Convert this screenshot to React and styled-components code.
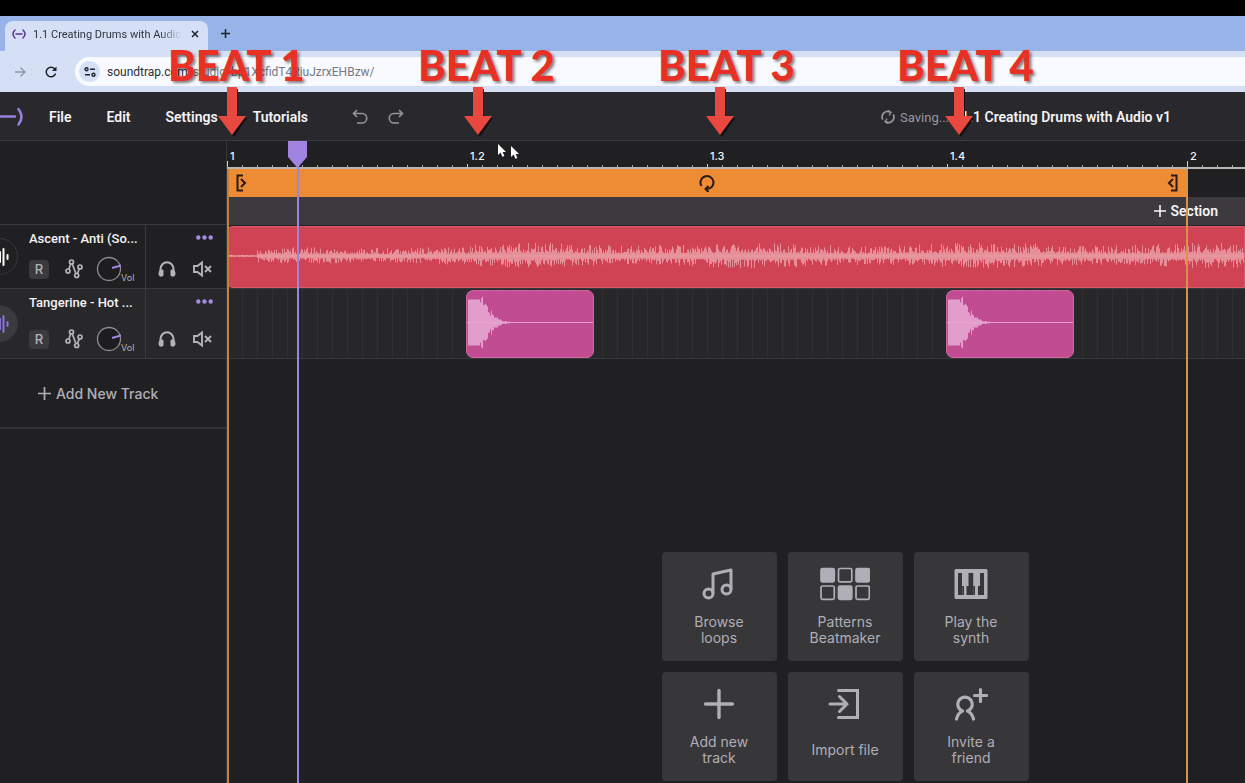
import React from "react";
import styled, { createGlobalStyle } from "styled-components";

const BEAT = 240;

const GlobalStyle = createGlobalStyle`
  * {
    box-sizing: border-box;
  }

  body {
    margin: 0;
    background: #202022;
    font-family: Inter, "Liberation Sans", sans-serif;
    color: #f4f3f6;
  }

  button,
  input {
    margin: 0;
    padding: 0;
    border: 0;
    background: none;
    color: inherit;
    font: inherit;
  }

  svg {
    display: block;
    flex: none;
  }
`;

const Page = styled.div`
  position: relative;
  display: flex;
  flex-direction: column;
  min-height: 100vh;
  overflow: hidden;
`;

/* ---------- browser chrome ---------- */

const TopBand = styled.div`
  height: 16px;
  background: #000;
`;

const TabStrip = styled.div`
  display: flex;
  align-items: flex-end;
  height: 35px;
  padding-left: 5px;
  background: #97b3e8;
  font-family: Roboto, "Open Sans", sans-serif;
`;

const Tab = styled.div`
  display: flex;
  align-items: center;
  gap: 7px;
  width: 203px;
  height: 30px;
  padding: 0 7px 4px;
  border-radius: 8px 8px 0 0;
  background: #d5e0f7;
`;

const TabTitle = styled.span`
  flex: 1;
  white-space: nowrap;
  font-size: 11px;
  color: #2f3440;
  mask-image: linear-gradient(to right, #000 85%, transparent);
`;

const ChromeButton = styled.button`
  display: grid;
  place-items: center;
  width: 14px;
  height: 20px;
  color: ${({ $faded }) => ($faded ? "#8d95a5" : "#1d2027")};
`;

const NewTab = styled(ChromeButton)`
  margin: 0 0 8px 10px;
`;

const AddressRow = styled.div`
  display: flex;
  align-items: center;
  height: 41px;
  padding-left: 13px;
  gap: 17px;
  background: #d5e0f7;
  font-family: Roboto, "Open Sans", sans-serif;
`;

const AddressBox = styled.label`
  flex: 1;
  display: flex;
  align-items: center;
  height: 29px;
  padding-left: 4px;
  border-radius: 15px 0 0 15px;
  background: #f8faff;
  font-size: 12px;
  color: #2b2f38;
`;

const SiteInfo = styled.span`
  display: grid;
  place-items: center;
  width: 21px;
  height: 21px;
  margin-right: 7px;
  border-radius: 50%;
  background: #d5e0f7;
  color: #20242c;
`;

const UrlInput = styled.input`
  flex: 1;
  outline: none;
  color: #747985;
`;

/* ---------- studio header ---------- */

const Header = styled.header`
  display: flex;
  align-items: center;
  height: 49px;
  padding: 2px 74px 0 0;
  border-bottom: 1px solid #3a393d;
  background: #29282c;
  font-family: Roboto, "Liberation Sans", sans-serif;
`;

const Menu = styled.nav`
  display: flex;
  gap: 35px;
  margin-left: 25px;
`;

const MenuButton = styled.button`
  font-size: 14px;
  font-weight: 600;
  line-height: 20px;
`;

const History = styled.div`
  display: flex;
  gap: 20px;
  margin-left: 44px;
  color: #96949a;
`;

const Status = styled.div`
  display: flex;
  align-items: center;
  gap: 5px;
  margin-left: auto;
  font-size: 13px;
  color: #9a989e;
`;

const ProjectTitle = styled.h1`
  margin: 0 0 0 12px;
  font-size: 14px;
  font-weight: 600;
  line-height: 20px;
`;

/* ---------- track list ---------- */

const Studio = styled.main`
  flex: 1;
  display: flex;
`;

const Sidebar = styled.aside`
  width: 227px;
  padding-top: 83px;
  overflow: hidden;
  border-right: 1px solid #363538;
`;

const TrackRow = styled.div`
  display: flex;
  height: ${({ $height }) => $height}px;
  border-top: 1px solid #3a393c;
  background: ${({ $active }) => ($active ? "#28282a" : "#202022")};
`;

const Avatar = styled.div`
  display: grid;
  place-items: center end;
  align-self: center;
  width: 37px;
  height: 37px;
  margin-left: -19px;
  padding-right: 8px;
  border: 1px solid #39383c;
  border-radius: 50%;
  background: ${({ $active }) => ($active ? "#3b3a3f" : "#202022")};
  color: ${({ $active }) => ($active ? "#8d72d6" : "#fff")};
`;

const TrackMain = styled.div`
  flex: 1;
  display: flex;
  flex-direction: column;
  justify-content: space-between;
  padding: 5px 0 6px 11px;
`;

const TrackName = styled.div`
  font-family: Roboto, "Liberation Sans", sans-serif;
  font-size: 13px;
  font-weight: 500;
  line-height: 18px;
  white-space: nowrap;
`;

const Controls = styled.div`
  display: flex;
  align-items: center;
  gap: ${({ $gap }) => $gap}px;
  height: 26px;
  color: #b5b2b9;
`;

const RecordButton = styled.button`
  width: 20px;
  height: 19px;
  border-radius: 4px;
  background: #3b3a3e;
  font-size: 13px;
  font-weight: 500;
  line-height: 19px;
`;

const IconButton = styled.button`
  display: block;
`;

const Volume = styled.label`
  display: flex;
  align-items: flex-end;
  margin-left: -4px;
  font-size: 9px;
  line-height: 8px;
`;

const HiddenRange = styled.input`
  width: 0;
  height: 0;
  appearance: none;
  opacity: 0;
`;

const TrackSide = styled.div`
  display: flex;
  flex-direction: column;
  justify-content: space-between;
  width: 81px;
  padding: 5px 0 6px 12px;
  border-left: 1px solid #3a393c;
`;

const MoreButton = styled(IconButton)`
  align-self: flex-end;
  margin: 5px 13px 0 0;
  color: #a68ae6;
`;

const AddTrack = styled.button`
  display: flex;
  align-items: center;
  gap: 5px;
  width: 100%;
  height: 71px;
  padding-left: 38px;
  border-top: 1px solid #3a393c;
  border-bottom: 2px solid #343336;
  font-size: 14px;
  font-weight: 500;
  color: #b1afb5;
`;

/* ---------- timeline ---------- */

const Timeline = styled.section`
  position: relative;
  flex: 1;
  display: flex;
  flex-direction: column;
  min-width: 0;
  overflow: hidden;
`;

const Ruler = styled.div`
  display: flex;
  height: 28px;
  overflow: hidden;
  border-bottom: 2px solid #b9b5b1;
`;

const BeatCell = styled.div`
  flex: none;
  width: ${BEAT}px;
  padding: 8px 0 0 3px;
  font-size: 11px;
  font-weight: 500;
  line-height: 14px;
  background:
    linear-gradient(#cfcdd2, #cfcdd2) 0 100% / 1px ${({ $bar }) => ($bar ? 6 : 3)}px no-repeat,
    repeating-linear-gradient(to right, #aaa8ad 0 1px, transparent 1px 15px) 0 100% / 100% 2px no-repeat;
`;

const LoopRow = styled.div`
  display: flex;
  height: 28px;
`;

const LoopBar = styled.div`
  display: flex;
  align-items: center;
  justify-content: space-between;
  width: ${BEAT * 4}px;
  padding: 0 8px;
  background: #ee8c35;
  color: #2a1a14;
`;

const SectionRow = styled.div`
  display: flex;
  justify-content: flex-end;
  height: 28px;
  padding-right: 27px;
  background: #3c3a3e;
`;

const SectionButton = styled.button`
  display: flex;
  align-items: center;
  gap: 5px;
  font-family: Roboto, "Liberation Sans", sans-serif;
  font-size: 14px;
  font-weight: 600;
`;

const Lane = styled.div`
  position: relative;
  height: ${({ $height }) => $height}px;
  border-bottom: 1px solid #38373a;
  background: ${({ $active }) =>
    $active
      ? "repeating-linear-gradient(to right, #303032 0 1px, #272729 1px 15px)"
      : "#202022"};
`;

const Clip = styled.div`
  position: absolute;
  top: 1px;
  bottom: 0;
  left: ${({ $start }) => $start * BEAT - 1}px;
  ${({ $length }) => ($length ? `width: ${$length}px;` : "right: 0;")}
  display: flex;
  align-items: center;
  overflow: hidden;
  border: 1px solid ${({ $edge }) => $edge};
  border-radius: ${({ $length }) => ($length ? "7px" : "7px 0 0 7px")};
  background: ${({ $color }) => $color};
`;

const Marker = styled.div`
  position: absolute;
  top: ${({ $top }) => $top}px;
  bottom: 0;
  left: ${({ $x }) => $x}px;
  width: 2px;
  background: ${({ $color }) => $color};
`;

const PlayheadCap = styled.svg`
  position: absolute;
  top: 0;
  left: 61px;
`;

const StartPanel = styled.div`
  flex: 1;
  display: flex;
  align-items: flex-end;
  justify-content: center;
  padding: 24px 0 2px 218px;
`;

const StartGrid = styled.div`
  display: grid;
  grid-template-columns: repeat(3, 115px);
  gap: 11px;
`;

const StartCard = styled.button`
  display: flex;
  flex-direction: column;
  align-items: center;
  height: 109px;
  padding: 15px 12px;
  border-radius: 4px;
  background: #373639;
  color: #b0aeb6;
`;

const CardLabel = styled.span`
  flex: 1;
  display: flex;
  align-items: center;
  margin-top: 12px;
  font-size: 14px;
  line-height: 16px;
`;

/* ---------- annotations ---------- */

const Callout = styled.div`
  position: absolute;
  top: 44px;
  left: ${({ $x }) => $x}px;
  font-family: Lato, "Open Sans", sans-serif;
  font-size: 42px;
  font-weight: 900;
  line-height: 42px;
  white-space: nowrap;
  color: #e83025;
  text-shadow: 2px 2px 3px rgba(0, 0, 0, 0.5);
`;

const Arrow = styled.svg`
  position: absolute;
  top: 86px;
  left: ${({ $x }) => $x - 16}px;
`;

const Pointer = styled.svg`
  position: absolute;
  top: ${({ $y }) => $y}px;
  left: ${({ $x }) => $x}px;
`;

const stroke = {
  fill: "none",
  stroke: "currentColor",
  strokeWidth: 2,
};

const Plus = ({ size = 12, width = 1.6 }) => (
  <svg width={size} height={size} viewBox="0 0 12 12" {...stroke} strokeWidth={width}>
    <path d="M6 0v12M0 6h12" />
  </svg>
);

const TrackWave = () => (
  <svg width="10" height="20" viewBox="0 0 10 20" {...stroke} strokeLinecap="round">
    <path d="M1 5v10M4.500 2v16M8.500 8v4" />
  </svg>
);

const Nodes = () => (
  <svg width="18" height="20" viewBox="0 0 18 20" {...stroke} strokeWidth="1.700">
    <path d="M3.700 10.200L5.700 5M7.200 4.800l3.800 9.900M12.400 14.600l1.900-4.800" />
    <circle cx="3" cy="12" r="2" />
    <circle cx="6.500" cy="3" r="2" />
    <circle cx="11.700" cy="16.500" r="2" />
    <circle cx="15" cy="8" r="2" />
  </svg>
);

const Knob = () => (
  <svg width="26" height="26" viewBox="0 0 26 26">
    <circle cx="14" cy="13" r="11.500" fill="#1d1c1f" stroke="#8f8d92" strokeWidth="1.300" />
    <path d="M17 12l9-2.500" stroke="#a287e2" strokeWidth="2" />
  </svg>
);

const Headphones = () => (
  <svg width="18" height="18" viewBox="0 0 18 18">
    <path d="M2.500 14V9a6.500 6.800 0 0 1 13 0v5" fill="none" stroke="currentColor" strokeWidth="2" />
    <path d="M4.500 9.500C2 9 0.500 11 0.500 13.500S2 17 4 16.500c1-.3 1.500-.8 1.500-1.500v-4.500zM13.500 9.500c2.500-.5 4 1.500 4 4S16 17 14 16.500c-1-.3-1.500-.8-1.500-1.500v-4.500z" fill="currentColor" />
  </svg>
);

const Mute = () => (
  <svg width="19" height="18" viewBox="0 0 19 18" {...stroke}>
    <path d="M1 6h3.500L9 2.500v13L4.500 12H1z" strokeWidth="1.900" />
    <path d="M12 6l6 6M18 6l-6 6" strokeWidth="1.900" />
  </svg>
);

const Dots = () => (
  <svg width="17" height="5" viewBox="0 0 17 5" fill="currentColor">
    <circle cx="2.300" cy="2.500" r="2.200" />
    <circle cx="8.500" cy="2.500" r="2.200" />
    <circle cx="14.700" cy="2.500" r="2.200" />
  </svg>
);

const MusicIcon = () => (
  <svg width="34" height="34" viewBox="0 0 34 34" {...stroke} strokeWidth="3">
    <circle cx="6.500" cy="26.500" r="4.500" />
    <circle cx="24.500" cy="22.500" r="4.500" />
    <path d="M11 26.500V7l18-4v19.500" strokeLinejoin="round" />
  </svg>
);

const PadIcon = () => (
  <svg width="50" height="34" viewBox="0 0 50 34" stroke="currentColor" strokeWidth="1.700">
    {[0, 1, 2, 3, 4, 5].map((i) => (
      <rect
        key={i}
        x={(i % 3) * 17.5 + 1}
        y={i < 3 ? 1.5 : 19}
        width="13.300"
        height="13.300"
        rx="1.500"
        fill={[0, 2, 4].includes(i) ? "currentColor" : "none"}
      />
    ))}
  </svg>
);

const PianoIcon = () => (
  <svg width="34" height="34" viewBox="0 0 34 34">
    <rect x="0.500" y="2" width="33" height="30" rx="1.500" fill="currentColor" />
    <g fill="#373639">
      <rect x="4" y="6" width="4.500" height="22" />
      <rect x="14" y="6" width="5.500" height="22" />
      <rect x="25.500" y="6" width="4.500" height="22" />
    </g>
    <g fill="currentColor">
      <rect x="8" y="5" width="6.500" height="14" />
      <rect x="19.500" y="5" width="6.500" height="14" />
    </g>
    <g fill="#373639">
      <rect x="8.500" y="19" width="1.500" height="9" />
      <rect x="12.500" y="19" width="2" height="9" />
      <rect x="19.500" y="19" width="1.500" height="9" />
      <rect x="24" y="19" width="2" height="9" />
    </g>
  </svg>
);

const BigPlusIcon = () => (
  <svg width="34" height="34" viewBox="0 0 34 34" {...stroke} strokeWidth="3.400" strokeLinecap="round">
    <path d="M17 3.500v27M3.500 17h27" />
  </svg>
);

const ImportIcon = () => (
  <svg width="34" height="34" viewBox="0 0 34 34" {...stroke} strokeWidth="3" strokeLinecap="round">
    <path d="M10.500 3.500h19v27h-19M2 17h17M11.500 9.500L19 17l-7.500 7.500" />
  </svg>
);

const InviteIcon = () => (
  <svg width="34" height="34" viewBox="0 0 34 34" {...stroke} strokeWidth="3.200" strokeLinecap="round" strokeLinejoin="round">
    <path d="M2.500 32q1.500-6 6-8a7.200 7.200 0 1 1 5 0q4.500 2 6 8M26.500 2.500v12M20.500 8.500h12" />
  </svg>
);

const tracks = [
  { name: "Ascent - Anti (So...", height: 64, active: false },
  { name: "Tangerine - Hot ...", height: 70, active: true },
];

const beats = ["1", "1.2", "1.3", "1.4", "2"];

const startActions = [
  { label: ["Browse", "loops"], Icon: MusicIcon },
  { label: ["Patterns", "Beatmaker"], Icon: PadIcon },
  { label: ["Play the", "synth"], Icon: PianoIcon },
  { label: ["Add new", "track"], Icon: BigPlusIcon },
  { label: ["Import file"], Icon: ImportIcon },
  { label: ["Invite a", "friend"], Icon: InviteIcon },
];

const callouts = [
  { text: "BEAT 1", x: 168, arrow: 232 },
  { text: "BEAT 2", x: 418, arrow: 478 },
  { text: "BEAT 3", x: 658, arrow: 720 },
  { text: "BEAT 4", x: 897, arrow: 959 },
];

const noise = (i) => {
  const v = Math.sin(i * 127.1) * 43758.5453;
  return v - Math.floor(v);
};

const songPath = () => {
  let d = "M0 29H2400";
  for (let x = 2; x < 2400; x += 1) {
    const rise = x < 30 ? 1 : Math.min(4.5 + x / 80, 8.5);
    const swell = 1 + 0.15 * Math.sin(x / 37);
    const up = rise * swell * (0.35 + noise(x) ** 2 * 1.1);
    const down = rise * swell * (0.35 + noise(x + 5000) ** 2 * 0.9);
    d += `M${x}.5 ${(29 - up).toFixed(1)}V${(29 + down).toFixed(1)}`;
  }
  return d;
};

const hitPath = () => {
  let d = "M0 31.5H128";
  for (let x = 1; x < 44; x += 1) {
    let amp = 23;
    if (x > 12) amp = 23 * Math.exp(-(((x - 12) / 13) ** 1.5));
    const wobble = x < 13 ? 1 : 0.6 + noise(x) * 0.7;
    const h = Math.max(amp * wobble, 0.5);
    d += `M${x}.5 ${(31.5 - h).toFixed(1)}V${(31.5 + h).toFixed(1)}`;
  }
  return d;
};

const SongWave = () => (
  <svg width="2400" height="61" viewBox="0 0 2400 61">
    <path d={songPath()} stroke="#eba3ab" strokeWidth="0.800" fill="none" />
  </svg>
);

const HitWave = () => (
  <svg width="128" height="66" viewBox="0 0 128 66">
    <path d={hitPath()} stroke="#e5a6d0" strokeWidth="0.900" fill="none" />
  </svg>
);

function BrowserChrome() {
  return (
    <>
      <TopBand />
      <TabStrip>
        <Tab>
          <svg width="14" height="12" viewBox="0 0 14 12" fill="none" stroke="#5a3390" strokeWidth="1.500" strokeLinecap="round">
            <path d="M3 2Q-1 6 3 10M11 2q4 4 0 8M4 6h6" />
          </svg>
          <TabTitle>1.1 Creating Drums with Audio</TabTitle>
          <ChromeButton aria-label="Close tab">
            <svg width="8" height="8" viewBox="0 0 8 8" {...stroke} strokeWidth="1.500">
              <path d="M1 1l6 6M7 1L1 7" />
            </svg>
          </ChromeButton>
        </Tab>
        <NewTab aria-label="New tab">
          <Plus size={9} width={2} />
        </NewTab>
      </TabStrip>
      <AddressRow>
        <ChromeButton aria-label="Forward" $faded>
          <svg width="12" height="12" viewBox="0 0 12 12" {...stroke} strokeWidth="1.300">
            <path d="M1 6h10M6.500 1.500L11 6l-4.500 4.500" />
          </svg>
        </ChromeButton>
        <ChromeButton aria-label="Reload">
          <svg width="12" height="12" viewBox="0 0 12 12" {...stroke} strokeWidth="1.500">
            <path d="M10.600 7.500A4.800 4.800 0 1 1 10 3.200" />
            <path d="M11.500 0.500v4.500H7z" fill="currentColor" stroke="none" />
          </svg>
        </ChromeButton>
        <AddressBox>
          <SiteInfo>
            <svg width="12" height="10" viewBox="0 0 12 10" {...stroke} strokeWidth="1.400">
              <circle cx="2.500" cy="2.300" r="1.500" />
              <circle cx="9.500" cy="7.700" r="1.500" />
              <path d="M6 2.300h5M1 7.700h5" />
            </svg>
          </SiteInfo>
          soundtrap.com
          <UrlInput aria-label="Address" defaultValue="/studio/bp1XcfidT4RiuJzrxEHBzw/" />
        </AddressBox>
      </AddressRow>
    </>
  );
}

function StudioHeader() {
  return (
    <Header>
      <svg width="24" height="20" viewBox="0 0 24 20" fill="none" stroke="#9b7fe0" strokeWidth="2.500" strokeLinecap="round">
        <path d="M-2 9.500h17M18.500 2q6 8 0 15.500" />
      </svg>
      <Menu>
        <MenuButton>File</MenuButton>
        <MenuButton>Edit</MenuButton>
        <MenuButton>Settings</MenuButton>
        <MenuButton>Tutorials</MenuButton>
      </Menu>
      <History>
        <IconButton aria-label="Undo">
          <svg width="16" height="16" viewBox="0 0 16 16" {...stroke} strokeWidth="1.600">
            <path d="M5 1L1.500 4.500 5 8M1.500 4.500H10a4.700 4.700 0 0 1 0 9.500H5" />
          </svg>
        </IconButton>
        <IconButton aria-label="Redo">
          <svg width="16" height="16" viewBox="0 0 16 16" {...stroke} strokeWidth="1.600">
            <path d="M11 1l3.500 3.500L11 8M14.500 4.500H6A4.700 4.700 0 0 0 6 14h5" />
          </svg>
        </IconButton>
      </History>
      <Status>
        <svg width="14" height="14" viewBox="0 0 14 14" {...stroke} strokeWidth="1.700">
          <path d="M1.800 9.500A5.500 5.500 0 0 1 9.500 2.200M12.200 4.500A5.500 5.500 0 0 1 4.500 11.800" />
          <path d="M7 0.500l3 2-2 2.800M7 13.500l-3-2 2-2.800" strokeWidth="1.300" />
        </svg>
        Saving...
      </Status>
      <ProjectTitle>1.1 Creating Drums with Audio v1</ProjectTitle>
    </Header>
  );
}

function Track({ name, height, active }) {
  return (
    <TrackRow $height={height} $active={active}>
      <Avatar $active={active}>
        <TrackWave />
      </Avatar>
      <TrackMain>
        <TrackName>{name}</TrackName>
        <Controls $gap={16}>
          <RecordButton aria-label="Record">R</RecordButton>
          <IconButton aria-label="Automation">
            <Nodes />
          </IconButton>
          <Volume>
            <Knob />
            <HiddenRange type="range" defaultValue={78} />
            Vol
          </Volume>
        </Controls>
      </TrackMain>
      <TrackSide>
        <MoreButton aria-label="Track options">
          <Dots />
        </MoreButton>
        <Controls $gap={17}>
          <IconButton aria-label="Solo">
            <Headphones />
          </IconButton>
          <IconButton aria-label="Mute">
            <Mute />
          </IconButton>
        </Controls>
      </TrackSide>
    </TrackRow>
  );
}

function TimelineView() {
  return (
    <Timeline>
      <Ruler>
        {beats.map((beat) => (
          <BeatCell key={beat} $bar={!beat.includes(".")}>
            {beat}
          </BeatCell>
        ))}
      </Ruler>
      <LoopRow>
        <LoopBar>
          <svg width="12" height="18" viewBox="0 0 12 18" {...stroke}>
            <path d="M8 1.500H2.500v15H8M6 5l4 4-4 4" />
          </svg>
          <svg width="16" height="18" viewBox="0 0 16 18" {...stroke}>
            <path d="M2.500 12A6.500 6.500 0 1 1 8 15M9.500 12l-3 3 3 3" />
          </svg>
          <svg width="12" height="18" viewBox="0 0 12 18" {...stroke}>
            <path d="M4 1.500h5.500v15H4M6 5L2 9l4 4" />
          </svg>
        </LoopBar>
      </LoopRow>
      <SectionRow>
        <SectionButton>
          <Plus />
          Section
        </SectionButton>
      </SectionRow>
      <Lane $height={64}>
        <Clip $start={0} $color="#d04354" $edge="#d95c6b">
          <SongWave />
        </Clip>
      </Lane>
      <Lane $height={70} $active>
        <Clip $start={1} $length={128} $color="#c14c91" $edge="#cf67a5">
          <HitWave />
        </Clip>
        <Clip $start={3} $length={128} $color="#c14c91" $edge="#cf67a5">
          <HitWave />
        </Clip>
      </Lane>
      <StartPanel>
        <StartGrid>
          {startActions.map(({ label, Icon }) => (
            <StartCard key={label[0]}>
              <Icon />
              <CardLabel>
                <span>
                  {label[0]}
                  {label[1] && <br />}
                  {label[1]}
                </span>
              </CardLabel>
            </StartCard>
          ))}
        </StartGrid>
      </StartPanel>
      <Marker $top={28} $x={0} $color="#c57f37" />
      <Marker $top={28} $x={959} $color="#d9924a" />
      <Marker $top={24} $x={70} $color="#9c85dc" />
      <PlayheadCap width="19" height="27" viewBox="0 0 19 27">
        <path d="M0 0h19v16l-9.500 11L0 16z" fill="#a184e2" />
      </PlayheadCap>
    </Timeline>
  );
}

export default function App() {
  return (
    <Page>
      <GlobalStyle />
      <BrowserChrome />
      <StudioHeader />
      <Studio>
        <Sidebar>
          {tracks.map((track) => (
            <Track key={track.name} {...track} />
          ))}
          <AddTrack>
            <Plus size={13} />
            Add New Track
          </AddTrack>
        </Sidebar>
        <TimelineView />
      </Studio>
      {callouts.map(({ text, x, arrow }) => (
        <React.Fragment key={text}>
          <Callout $x={x}>{text}</Callout>
          <Arrow $x={arrow} width="32" height="52" viewBox="0 0 32 52">
            <path d="M12 3h10v29h9L18 51 4 32h8z" fill="#120d10" />
            <path d="M11 1h10v29h9L16 49 2 30h9z" fill="#e9483e" />
          </Arrow>
        </React.Fragment>
      ))}
      {[
        [497, 143],
        [510, 145],
      ].map(([x, y]) => (
        <Pointer key={x} $x={x} $y={y} width="10" height="15" viewBox="0 0 10 15">
          <path d="M1 1v11l2.600-2.400 1.800 4.200 2-.9-1.800-4H9z" fill="#fff" />
        </Pointer>
      ))}
    </Page>
  );
}
